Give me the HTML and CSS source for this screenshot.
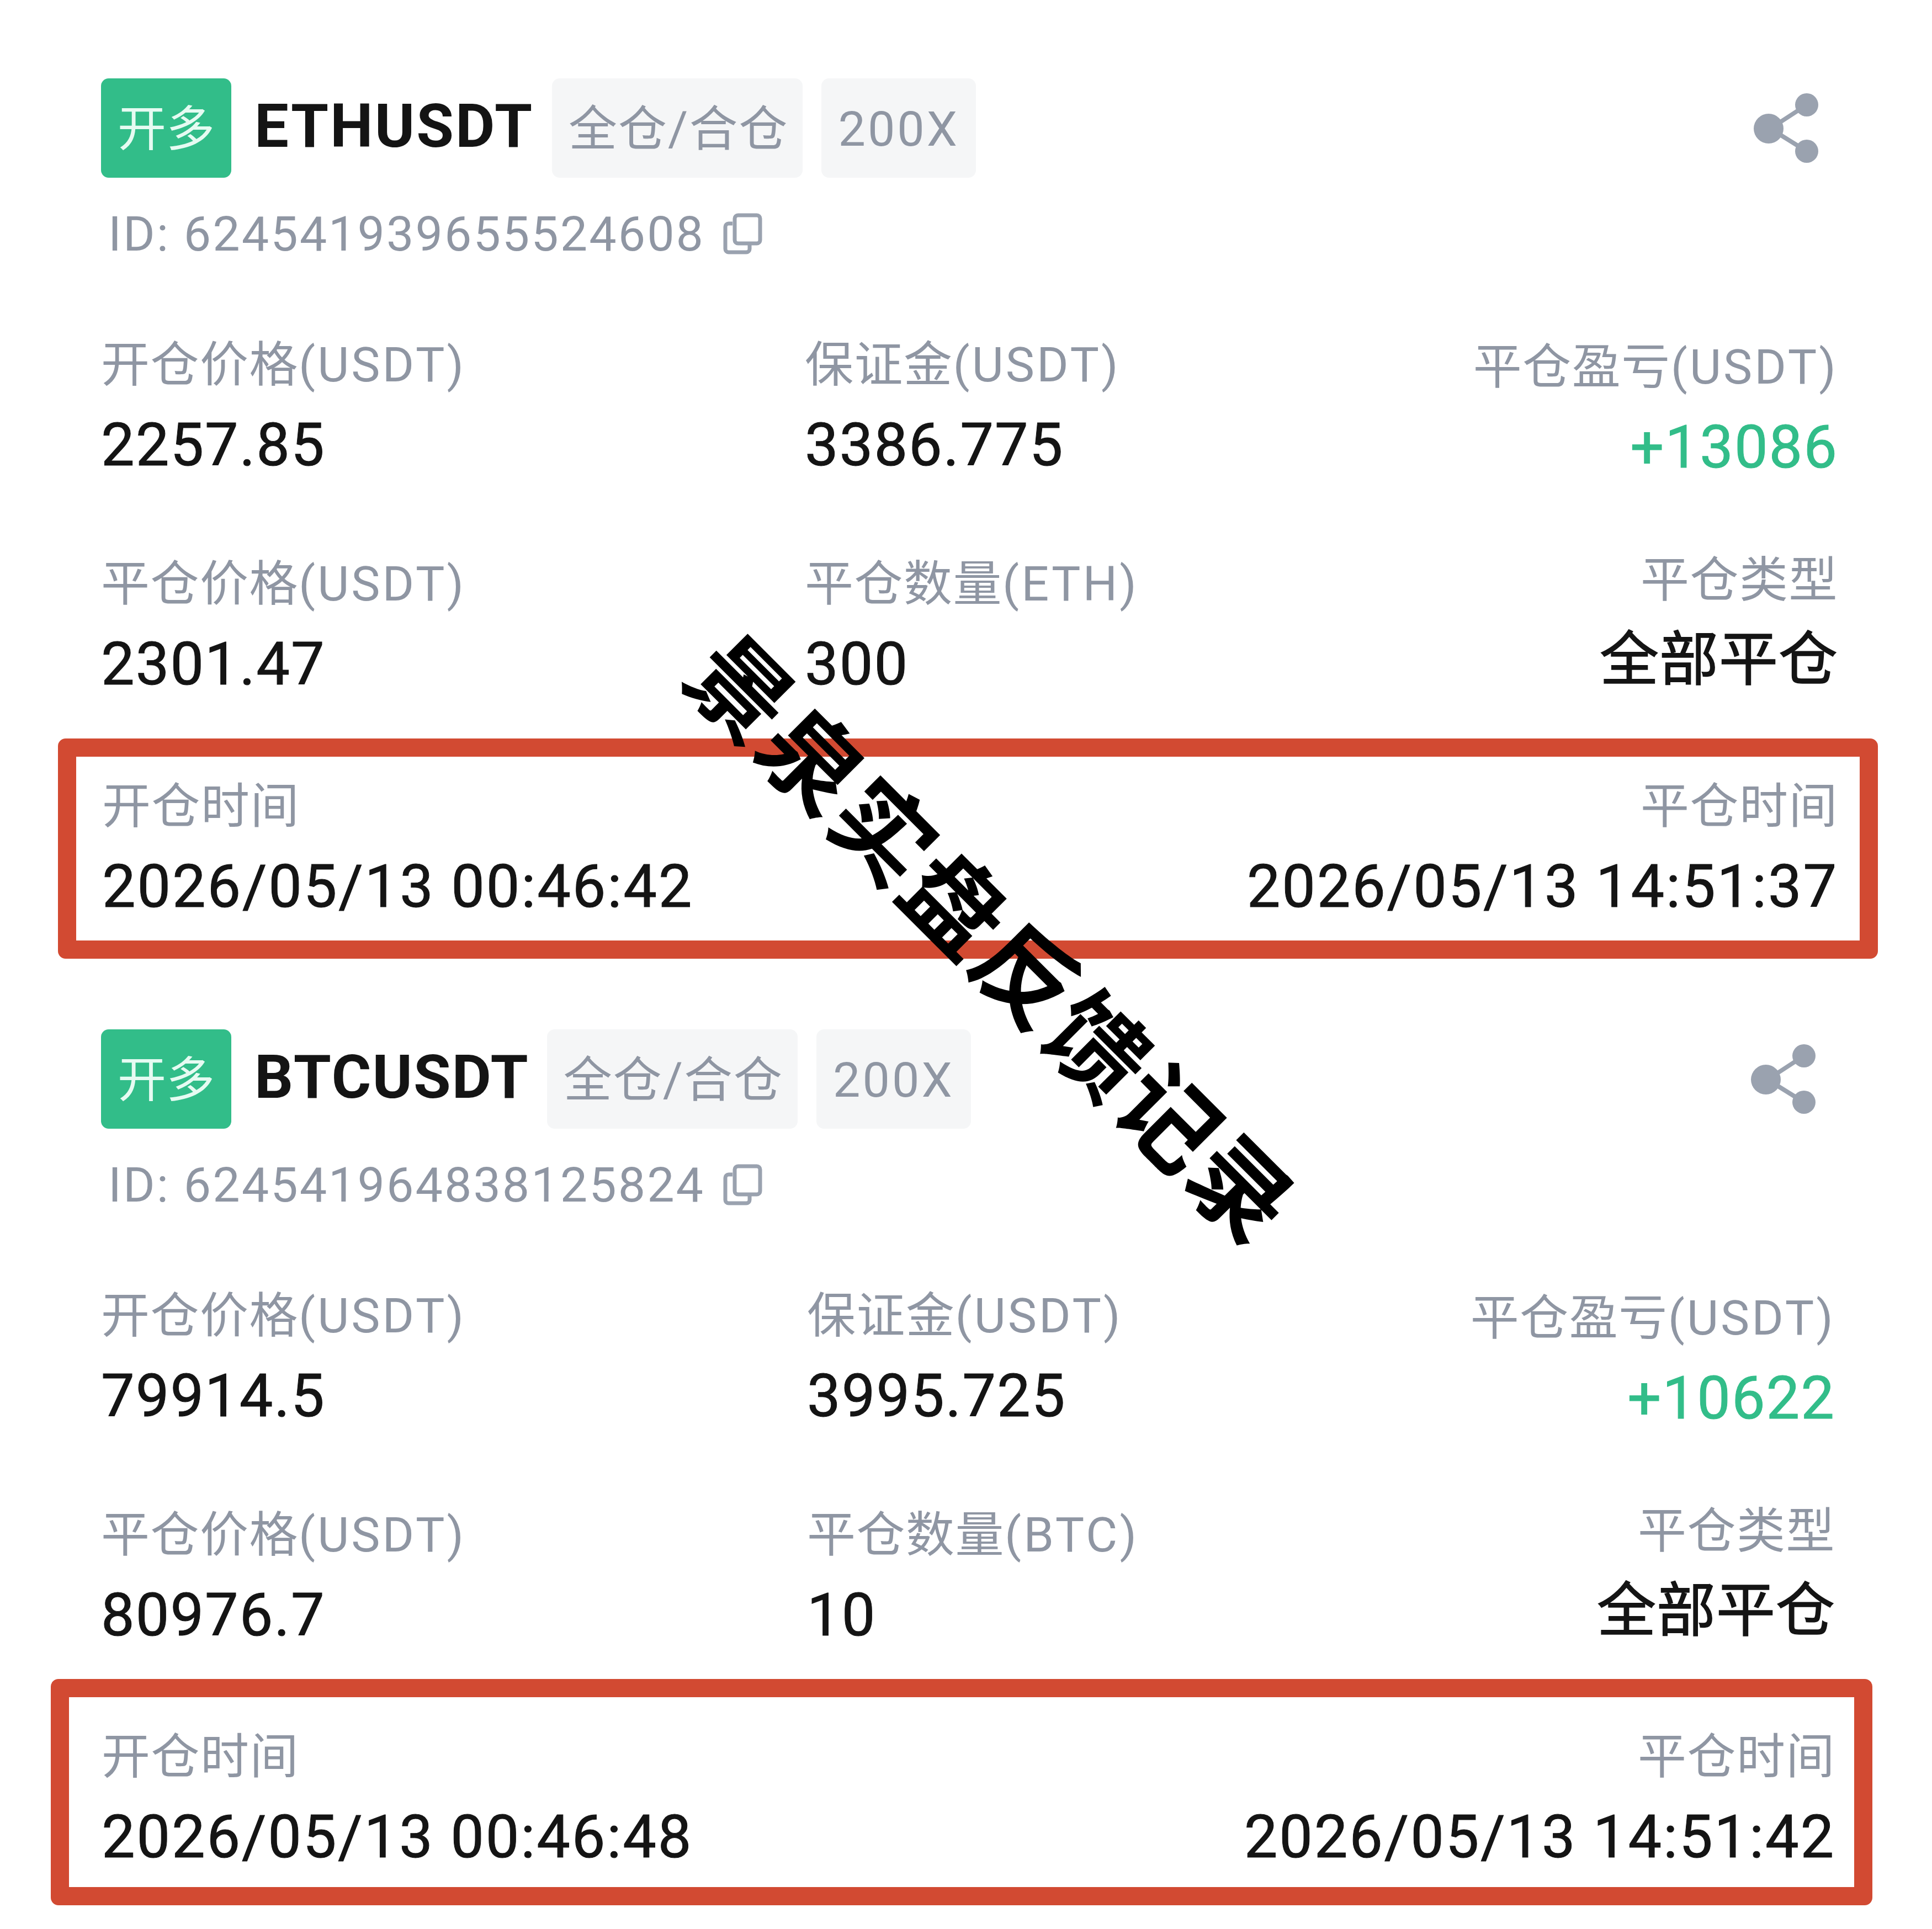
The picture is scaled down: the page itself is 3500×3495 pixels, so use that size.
FILE: index.html
```html
<!DOCTYPE html>
<html lang="zh-CN">
<head>
  <meta charset="UTF-8" />
  <title>景泉实盘反馈记录</title>
  <link rel="stylesheet" href="styles.css">
</head>
<body>

  <div class="page">

    <!-- ETH -->
    <section class="trade trade-eth">
      <div class="head">
        <span class="tag-side">开多</span>
        <h2 class="symbol">ETHUSDT</h2>
        <span class="chip chip-mode">全仓/合仓</span>
        <span class="chip chip-lever">200X</span>
        <svg class="share" viewBox="0 0 120 130">
          <path d="M30 64 L96 21 M30 64 L96 105" stroke="#9aa2af" stroke-width="8" fill="none"/>
          <circle cx="27" cy="64" r="27" fill="#9aa2af"/>
          <circle cx="96" cy="21" r="21" fill="#9aa2af"/>
          <circle cx="96" cy="105" r="21" fill="#9aa2af"/>
        </svg>
      </div>
      <div class="order-id">
        <span>ID: 624541939655524608</span>
        <svg class="copy" viewBox="0 0 71 75">
          <rect x="21" y="4" width="46" height="51" rx="6" stroke="#9aa2af" stroke-width="7" fill="none"/>
          <path d="M17 19 H10 a6 6 0 0 0 -6 6 V65 a6 6 0 0 0 6 6 H42 a6 6 0 0 0 6 -6 V58" stroke="#9aa2af" stroke-width="7" fill="none"/>
        </svg>
      </div>
      <div class="stats">
        <div class="cell">
          <div class="label">开仓价格<span class="unit">(USDT)</span></div>
          <div class="value">2257.85</div>
        </div>
        <div class="cell">
          <div class="label">保证金<span class="unit">(USDT)</span></div>
          <div class="value">3386.775</div>
        </div>
        <div class="cell cell-end cell-low">
          <div class="label">平仓盈亏<span class="unit">(USDT)</span></div>
          <div class="value profit">+13086</div>
        </div>
        <div class="cell">
          <div class="label">平仓价格<span class="unit">(USDT)</span></div>
          <div class="value">2301.47</div>
        </div>
        <div class="cell">
          <div class="label">平仓数量<span class="unit">(ETH)</span></div>
          <div class="value">300</div>
        </div>
        <div class="cell cell-end cell-high">
          <div class="label">平仓类型</div>
          <div class="value value-cjk">全部平仓</div>
        </div>
      </div>
      <div class="times">
        <div class="cell">
          <div class="label">开仓时间</div>
          <div class="value date">2026/05/13 00:46:42</div>
        </div>
        <div class="cell cell-end">
          <div class="label">平仓时间</div>
          <div class="value date">2026/05/13 14:51:37</div>
        </div>
      </div>
    </section>

    <!-- BTC -->
    <section class="trade trade-btc">
      <div class="head">
        <span class="tag-side">开多</span>
        <h2 class="symbol">BTCUSDT</h2>
        <span class="chip chip-mode">全仓/合仓</span>
        <span class="chip chip-lever">200X</span>
        <svg class="share" viewBox="0 0 120 130">
          <path d="M30 64 L96 21 M30 64 L96 105" stroke="#9aa2af" stroke-width="8" fill="none"/>
          <circle cx="27" cy="64" r="27" fill="#9aa2af"/>
          <circle cx="96" cy="21" r="21" fill="#9aa2af"/>
          <circle cx="96" cy="105" r="21" fill="#9aa2af"/>
        </svg>
      </div>
      <div class="order-id">
        <span>ID: 624541964838125824</span>
        <svg class="copy" viewBox="0 0 71 75">
          <rect x="21" y="4" width="46" height="51" rx="6" stroke="#9aa2af" stroke-width="7" fill="none"/>
          <path d="M17 19 H10 a6 6 0 0 0 -6 6 V65 a6 6 0 0 0 6 6 H42 a6 6 0 0 0 6 -6 V58" stroke="#9aa2af" stroke-width="7" fill="none"/>
        </svg>
      </div>
      <div class="stats">
        <div class="cell">
          <div class="label">开仓价格<span class="unit">(USDT)</span></div>
          <div class="value">79914.5</div>
        </div>
        <div class="cell">
          <div class="label">保证金<span class="unit">(USDT)</span></div>
          <div class="value">3995.725</div>
        </div>
        <div class="cell cell-end cell-low">
          <div class="label">平仓盈亏<span class="unit">(USDT)</span></div>
          <div class="value profit">+10622</div>
        </div>
        <div class="cell">
          <div class="label">平仓价格<span class="unit">(USDT)</span></div>
          <div class="value">80976.7</div>
        </div>
        <div class="cell">
          <div class="label">平仓数量<span class="unit">(BTC)</span></div>
          <div class="value">10</div>
        </div>
        <div class="cell cell-end cell-high">
          <div class="label">平仓类型</div>
          <div class="value value-cjk">全部平仓</div>
        </div>
      </div>
      <div class="times">
        <div class="cell">
          <div class="label">开仓时间</div>
          <div class="value date">2026/05/13 00:46:48</div>
        </div>
        <div class="cell cell-end">
          <div class="label">平仓时间</div>
          <div class="value date">2026/05/13 14:51:42</div>
        </div>
      </div>
    </section>

    <div class="watermark">景泉实盘反馈记录</div>
  </div>

</body>
</html>
```

FILE: styles.css
```css
body {
  margin: 0;
  background: #fff;
  font-family: Roboto, "Noto Sans CJK SC", sans-serif;
  color: #141414;
}
.page {
  position: relative;
  height: 3495px;
  overflow: hidden;
  padding-top: 142px;
  box-sizing: border-box;
}

/* header row */
.head {
  display: flex;
  align-items: stretch;
  height: 180px;
  padding-left: 183px;
  padding-right: 203px;
}
.tag-side {
  width: 236px;
  background: #32bd89;
  color: #e6fbf2;
  border-radius: 14px;
  font-size: 88px;
  line-height: 184px;
  text-align: center;
}
.symbol {
  margin: 0 0 0 42px;
  font-size: 110px;
  font-weight: 700;
  line-height: 174px;
  letter-spacing: 3px;
  white-space: nowrap;
}
.chip {
  margin-left: 34px;
  padding: 0 30px;
  background: #f5f6f7;
  border-radius: 14px;
  color: #8f96a3;
  font-size: 88px;
  line-height: 184px;
  letter-spacing: 2px;
  white-space: nowrap;
}
.chip-mode {
  margin-left: 33px;
  padding-right: 26px;
}
.chip-lever {
  letter-spacing: 4px;
}
.share {
  width: 120px;
  height: 130px;
  margin: 27px 0 0 auto;
}

/* order id */
.order-id {
  display: flex;
  align-items: center;
  margin-top: 51px;
  padding-left: 196px;
  height: 100px;
  color: #8f96a3;
  font-size: 88px;
  letter-spacing: 3px;
}
.copy {
  width: 71px;
  height: 75px;
  margin-left: 33px;
}

/* stats */
.stats {
  display: grid;
  grid-template-columns: 1275px 1fr auto;
  row-gap: 123px;
  margin-top: 128px;
  padding: 0 170px 0 183px;
}
.label {
  color: #8f96a3;
  font-size: 88px;
  line-height: 120px;
  letter-spacing: 1.5px;
  white-space: nowrap;
}
.unit {
  letter-spacing: 4px;
}
.value {
  margin-top: 20px;
  font-size: 108px;
  line-height: 130px;
  letter-spacing: 2px;
  white-space: nowrap;
  -webkit-text-stroke: 1px currentColor;
}
.value-cjk {
  font-size: 107px;
  letter-spacing: 1px;
  -webkit-text-stroke: 1.5px currentColor;
}
.cell-end {
  text-align: right;
}
.cell-low {
  margin-top: 4px;
}
.cell-high {
  margin-top: -7px;
}
.profit {
  color: #32bd89;
}
.date {
  letter-spacing: 2.8px;
}

/* red highlighted time row */
.times {
  display: flex;
  justify-content: space-between;
  box-sizing: border-box;
  border: 33px solid #d24a32;
  border-radius: 14px;
}
.trade-eth .times {
  margin: 70px 98px 0 105px;
  padding: 30px 39px 0 47px;
  height: 399px;
}

/* second card sits a little further left on the right side */
.trade-btc {
  margin-top: 128px;
}
.trade-btc .head {
  padding-right: 208px;
}
.trade-btc .symbol {
  letter-spacing: 2px;
}
.trade-btc .stats {
  grid-template-columns: 1279px 1fr auto;
  padding-right: 175px;
}
.trade-btc .times {
  margin: 51px 108px 0 92px;
  padding: 48px 34px 0 59px;
  height: 410px;
}
.trade-btc .chip-mode {
  margin-left: 32px;
}

.watermark {
  position: absolute;
  left: 1791px;
  top: 1707px;
  transform: translate(-50%, -50%) rotate(45deg);
  color: #000;
  font-size: 180px;
  font-weight: 700;
  letter-spacing: 3px;
  line-height: 1;
  white-space: nowrap;
}
```
